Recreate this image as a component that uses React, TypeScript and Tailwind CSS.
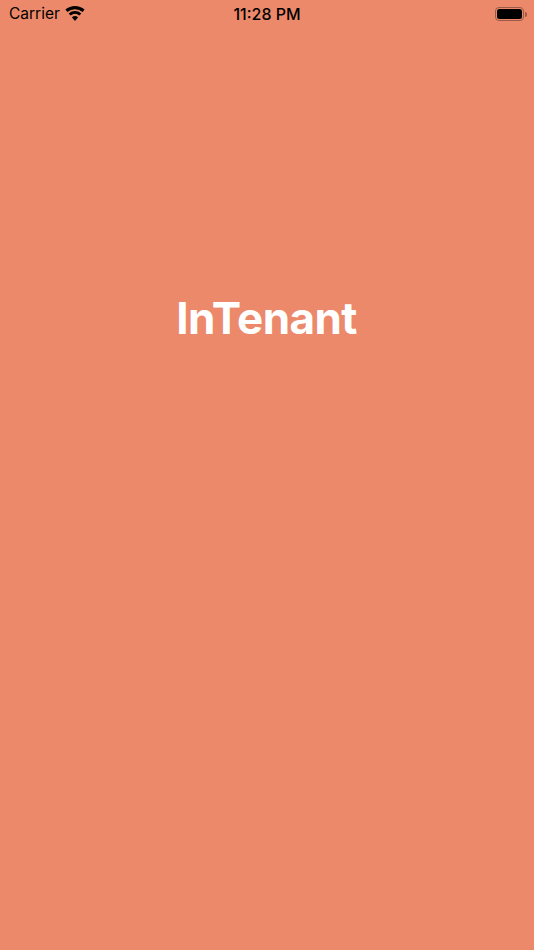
import React from 'react';

const Wifi = () => (
  <svg width="20" height="15" viewBox="0 0 20 15" className="ml-[5px] -mt-[2px]">
    <path d="M10 15 L6.9 11.2 A5 5 0 0 1 13.1 11.2 Z" fill="#000" />
    <path d="M5.6 9.6 L3.7 7.4 A9.8 9.8 0 0 1 16.3 7.4 L14.4 9.6 A7 7 0 0 0 5.6 9.6 Z" fill="#000" />
    <path d="M2.4 5.9 L0.4 3.6 A14.8 14.8 0 0 1 19.6 3.6 L17.6 5.9 A12 12 0 0 0 2.4 5.9 Z" fill="#000" />
  </svg>
);

const Battery = () => (
  <div className="flex items-center">
    <div className="w-[29px] h-[14px] rounded-[4px] border border-[#9a5a45] p-[1px]">
      <div className="w-full h-full rounded-[2.5px] bg-black" />
    </div>
    <div className="w-[2px] h-[5px] ml-[1px] rounded-r-sm bg-[#9a5a45]" />
  </div>
);

const App = () => {
  return (
    <div className="w-[534px] h-[950px] bg-[#ec896a] overflow-hidden font-['Inter',sans-serif]">
      <div className="h-[28px] pl-[9px] pr-[7px] flex items-center justify-between text-black relative">
        <div className="flex items-center">
          <span className="text-[15.5px] font-normal leading-none">Carrier</span>
          <Wifi />
        </div>
        <span className="absolute left-0 right-0 text-center text-[16px] font-medium leading-none">11:28 PM</span>
        <Battery />
      </div>
      <div className="pt-[261px] flex justify-center">
        <h1 className="text-[44px] leading-[58px] font-bold text-white tracking-[-0.6px] pr-[1px]">InTenant</h1>
      </div>
    </div>
  );
};

export default App;
